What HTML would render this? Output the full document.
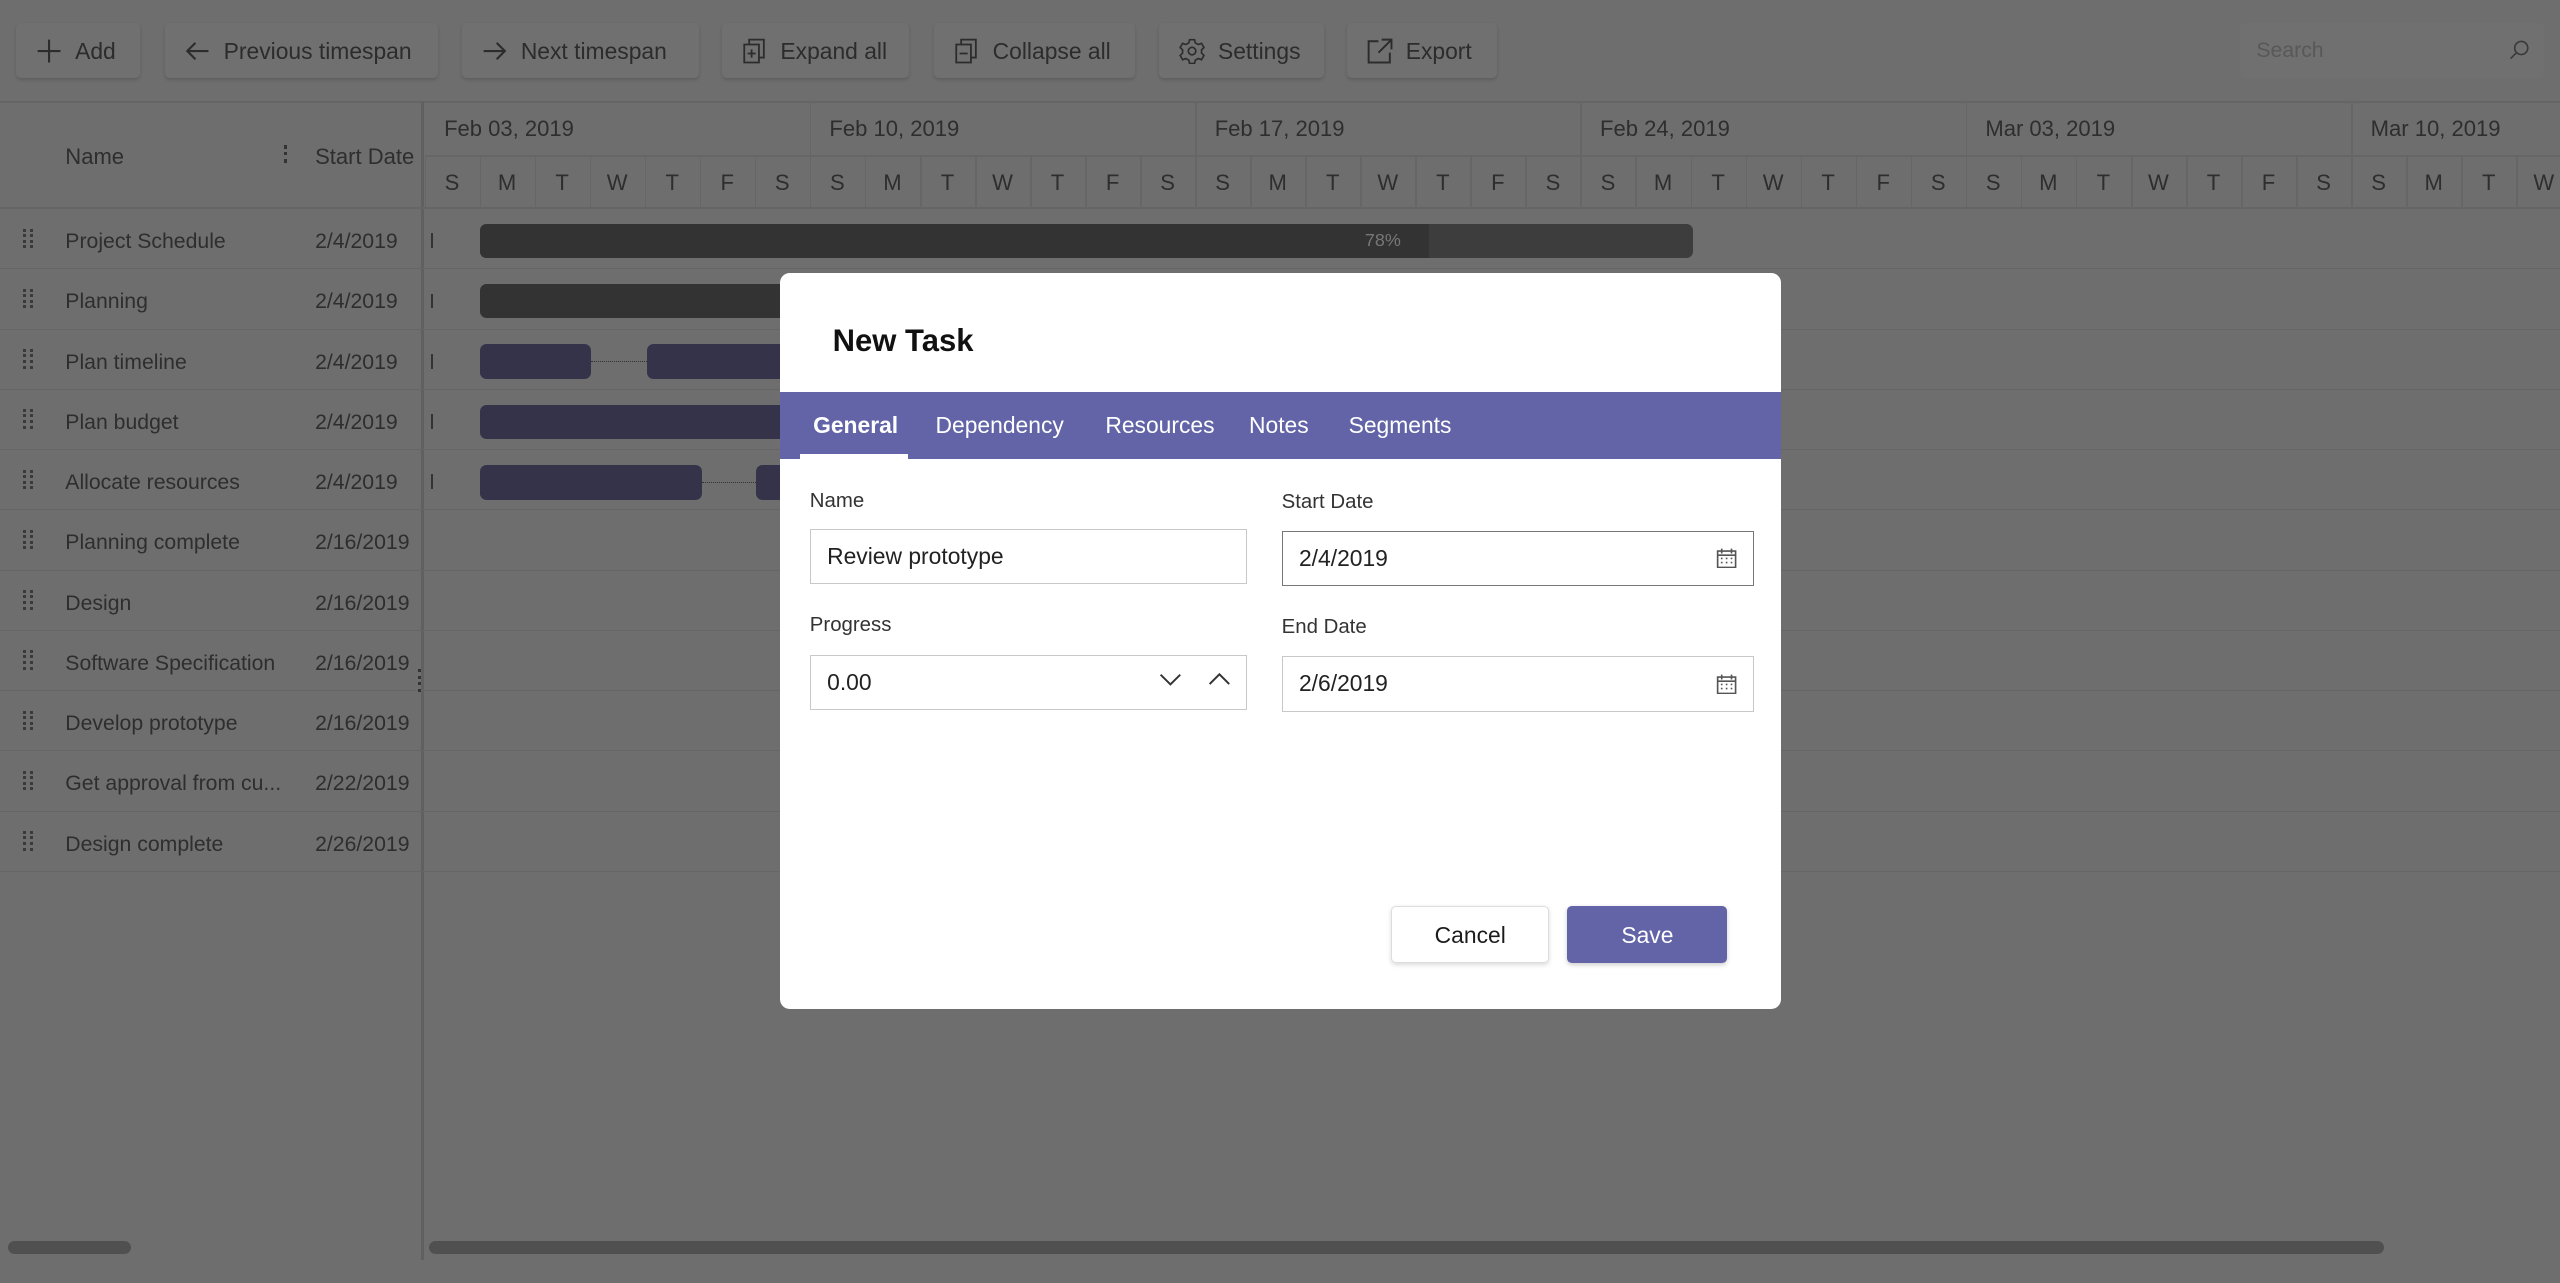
<!DOCTYPE html>
<html><head><meta charset="utf-8"><style>
*{box-sizing:border-box;margin:0;padding:0}
html,body{width:2560px;height:1283px;overflow:hidden}
body{background:#6b6b6b;font-family:"Liberation Sans",sans-serif;color:#1b1b1b}
#s{zoom:1.6327;position:relative;width:1568px;height:786px;background:#6e6e6e}
.a{position:absolute}
.btn{position:absolute;top:14px;height:34px;background:#707070;border-radius:3px;box-shadow:0 1px 2px rgba(0,0,0,.15);color:#2c2c2c;font-size:14px;line-height:35px;padding-left:36px}
.btn svg{position:absolute;left:12px;top:9px}
.g{color:#2e2e2e;font-size:13px}
.row{position:absolute;left:0;width:1568px;height:37px;border-bottom:1px solid #666}
.bar{position:absolute;height:21px;border-radius:4px}
.tab{position:absolute;top:0;height:41px;line-height:41px;color:#fff;font-size:14px}
.lbl{position:absolute;font-size:12.5px;color:#333}
.inp{position:absolute;background:#fff;border:1px solid #c8c8c8;font-size:14px;padding-left:10px;line-height:33px;color:#222}
</style></head><body><div id="s">
<div class="btn" style="left:10px;width:76px">Add<svg width="16" height="16" viewBox="0 0 16 16"><path d="M8 1v14M1 8h14" stroke="#2c2c2c" stroke-width="1.3"/></svg></div>
<div class="btn" style="left:101px;width:167px">Previous timespan<svg width="16" height="16" viewBox="0 0 16 16"><path d="M15 8H2M7 3L2 8l5 5" stroke="#2c2c2c" stroke-width="1.3" fill="none"/></svg></div>
<div class="btn" style="left:283px;width:145px">Next timespan<svg width="16" height="16" viewBox="0 0 16 16"><path d="M1 8h13M9 3l5 5-5 5" stroke="#2c2c2c" stroke-width="1.3" fill="none"/></svg></div>
<div class="btn" style="left:442px;width:115px">Expand all<svg width="16" height="16" viewBox="0 0 16 16"><path d="M2 4h9v11H2zM5 4V1h9v11h-3M4 9.5h5M6.5 7v5" stroke="#2c2c2c" stroke-width="1.1" fill="none"/></svg></div>
<div class="btn" style="left:572px;width:123px">Collapse all<svg width="16" height="16" viewBox="0 0 16 16"><path d="M2 4h9v11H2zM5 4V1h9v11h-3M4 9.5h5" stroke="#2c2c2c" stroke-width="1.1" fill="none"/></svg></div>
<div class="btn" style="left:710px;width:101px">Settings<svg width="16" height="16" viewBox="0 0 16 16"><circle cx="8" cy="8" r="2.3" stroke="#2c2c2c" fill="none"/><path d="M6.5 1h3l.5 2 1.8 1 2-.7 1.5 2.6-1.5 1.4v2l1.5 1.4-1.5 2.6-2-.7-1.8 1-.5 2h-3l-.5-2-1.8-1-2 .7L.7 10.7 2.2 9.3v-2L.7 5.9 2.2 3.3l2 .7L6 3z" stroke="#2c2c2c" fill="none"/></svg></div>
<div class="btn" style="left:825px;width:92px">Export<svg width="16" height="16" viewBox="0 0 16 16"><path d="M7 2H1v13h13V9M9 1h6v6M15 1L7 9" stroke="#2c2c2c" stroke-width="1.2" fill="none"/></svg></div>
<div class="a" style="left:1372px;top:14px;width:186px;height:34px;background:#707070;border-radius:3px;font-size:13px;color:#585858;line-height:34px;padding-left:10px">Search<svg class="a" style="right:8px;top:10px" width="13" height="13" viewBox="0 0 13 13"><circle cx="7.5" cy="5.5" r="4" stroke="#3a3a3a" fill="none"/><path d="M4.6 8.4L1 12" stroke="#3a3a3a"/></svg></div>
<div class="a" style="left:0;top:62px;width:1568px;height:1px;background:#656565"></div>
<div class="a" style="left:258px;top:62px;width:2px;height:710px;background:#606060"></div>
<div class="a g" style="left:40px;top:88px;font-size:13.5px">Name</div>
<div class="a" style="left:174px;top:89px;width:2px;height:11px;border-left:2px dotted #333"></div>
<div class="a g" style="left:193px;top:88px;font-size:13.5px">Start Date</div>
<div class="a" style="left:260px;top:95px;width:1308px;height:1px;background:#666"></div>
<div class="a" style="left:0;top:127px;width:1568px;height:1px;background:#656565"></div>
<div id="hd"></div>
<div id="rows"></div>
<div class="bar" style="left:294px;top:137px;width:743px;background:#3d3d3d"></div>
<div class="bar" style="left:294px;top:137px;width:581px;background:#333;border-radius:4px 0 0 4px"></div>
<div class="a" style="left:836px;top:141px;font-size:11px;color:#777">78%</div>
<div class="bar" style="left:294px;top:174px;width:200px;background:#333"></div>
<div class="bar" style="left:294px;top:211px;width:68px;background:#34334a"></div>
<div class="a" style="left:362px;top:221px;width:34px;border-top:1px dotted #333"></div>
<div class="bar" style="left:396px;top:211px;width:100px;background:#34334a"></div>
<div class="bar" style="left:294px;top:248px;width:200px;background:#34334a"></div>
<div class="bar" style="left:294px;top:285px;width:136px;background:#34334a"></div>
<div class="a" style="left:430px;top:295px;width:33px;border-top:1px dotted #333"></div>
<div class="bar" style="left:463px;top:285px;width:30px;background:#34334a"></div>
<div class="a" style="left:256px;top:410px;width:2px;height:14px;border-left:2px dotted #333"></div>
<div class="a" style="left:5px;top:760px;width:75px;height:8px;border-radius:4px;background:#505050"></div>
<div class="a" style="left:263px;top:760px;width:1197px;height:8px;border-radius:4px;background:#505050"></div>
<div class="a" style="left:478px;top:167px;width:613px;height:451px;background:#fff;border-radius:6px;overflow:hidden">
<div class="a" style="left:32px;top:31px;font-size:19px;font-weight:bold;color:#111">New Task</div>
<div class="a" style="left:0;top:73px;width:613px;height:41px;background:#6264a7">
<div class="tab" style="left:20px;font-weight:bold">General</div>
<div class="a" style="left:12px;top:38px;width:66px;height:3px;background:#fff"></div>
<div class="tab" style="left:95px">Dependency</div>
<div class="tab" style="left:199px">Resources</div>
<div class="tab" style="left:287px">Notes</div>
<div class="tab" style="left:348px">Segments</div>
</div>
<div class="lbl" style="left:18px;top:133px">Name</div>
<div class="inp" style="left:18px;top:157px;width:268px;height:34px">Review prototype</div>
<div class="lbl" style="left:307px;top:134px">Start Date</div>
<div class="inp" style="left:307px;top:158px;width:289px;height:34px;border-color:#777">2/4/2019</div>
<div class="lbl" style="left:18px;top:209px">Progress</div>
<div class="inp" style="left:18px;top:234px;width:268px;height:34px">0.00</div>
<svg class="a" style="left:232px;top:245px" width="14" height="9" viewBox="0 0 14 9"><path d="M1 1l6 6 6-6" stroke="#333" fill="none" stroke-width="1.2"/></svg>
<svg class="a" style="left:262px;top:244px" width="14" height="9" viewBox="0 0 14 9"><path d="M1 8l6-6 6 6" stroke="#333" fill="none" stroke-width="1.2"/></svg>
<div class="lbl" style="left:307px;top:210px">End Date</div>
<div class="inp" style="left:307px;top:235px;width:289px;height:34px">2/6/2019</div>
<svg class="a" style="left:573px;top:168px" width="13" height="13" viewBox="0 0 13 13"><path d="M1 2.5h11v10H1zM1 5h11M3.5 1v3M9.5 1v3M3 7h1M6 7h1M9 7h1M3 9.5h1M6 9.5h1M9 9.5h1" stroke="#555" fill="none"/></svg>
<svg class="a" style="left:573px;top:245px" width="13" height="13" viewBox="0 0 13 13"><path d="M1 2.5h11v10H1zM1 5h11M3.5 1v3M9.5 1v3M3 7h1M6 7h1M9 7h1M3 9.5h1M6 9.5h1M9 9.5h1" stroke="#555" fill="none"/></svg>
<div class="a" style="left:374px;top:388px;width:97px;height:35px;border:1px solid #ddd;border-radius:3px;box-shadow:0 1px 3px rgba(0,0,0,.15);text-align:center;line-height:35px;font-size:14px">Cancel</div>
<div class="a" style="left:482px;top:388px;width:98px;height:35px;background:#6264a7;border-radius:3px;box-shadow:0 1px 3px rgba(0,0,0,.2);text-align:center;line-height:36px;font-size:14px;color:#fff">Save</div>
</div>
</div>
<script>
var h='',d='SMTWTFS',w=['Feb 03, 2019','Feb 10, 2019','Feb 17, 2019','Feb 24, 2019','Mar 03, 2019','Mar 10, 2019'];
var dw=236/7;
for(var i=0;i<6;i++){var x=260+i*236;h+='<div class="a g" style="left:'+(x+12)+'px;top:71px;font-size:13.5px">'+w[i]+'</div>';if(i)h+='<div class="a" style="left:'+x+'px;top:62px;width:1px;height:33px;background:#666"></div>';}
for(var j=0;j<39;j++){var x=260+j*dw;h+='<div class="a g" style="left:'+x+'px;top:104px;width:'+dw+'px;text-align:center;font-size:13.5px">'+d[j%7]+'</div><div class="a" style="left:'+x+'px;top:95px;width:1px;height:33px;background:#666"></div>';}
document.getElementById('hd').innerHTML=h;
var n=[['Project Schedule','2/4/2019'],['Planning','2/4/2019'],['Plan timeline','2/4/2019'],['Plan budget','2/4/2019'],['Allocate resources','2/4/2019'],['Planning complete','2/16/2019'],['Design','2/16/2019'],['Software Specification','2/16/2019'],['Develop prototype','2/16/2019'],['Get approval from cu...','2/22/2019'],['Design complete','2/26/2019']];
var r='';
for(var k=0;k<n.length;k++){var y=128+k*36.9;r+='<div class="row" style="top:'+y+'px"></div><div class="a" style="left:14px;top:'+(y+12)+'px;width:6px;height:12px;border-left:2px dotted #3a3a3a;border-right:2px dotted #3a3a3a"></div><div class="a g" style="left:40px;top:'+(y+13)+'px">'+n[k][0]+'</div><div class="a g" style="left:193px;top:'+(y+13)+'px">'+n[k][1]+'</div>';if(k<5)r+='<div class="a" style="left:264px;top:'+(y+15)+'px;width:1px;height:9px;background:#333"></div>';}
document.getElementById('rows').innerHTML=r;
</script>
</body></html>
